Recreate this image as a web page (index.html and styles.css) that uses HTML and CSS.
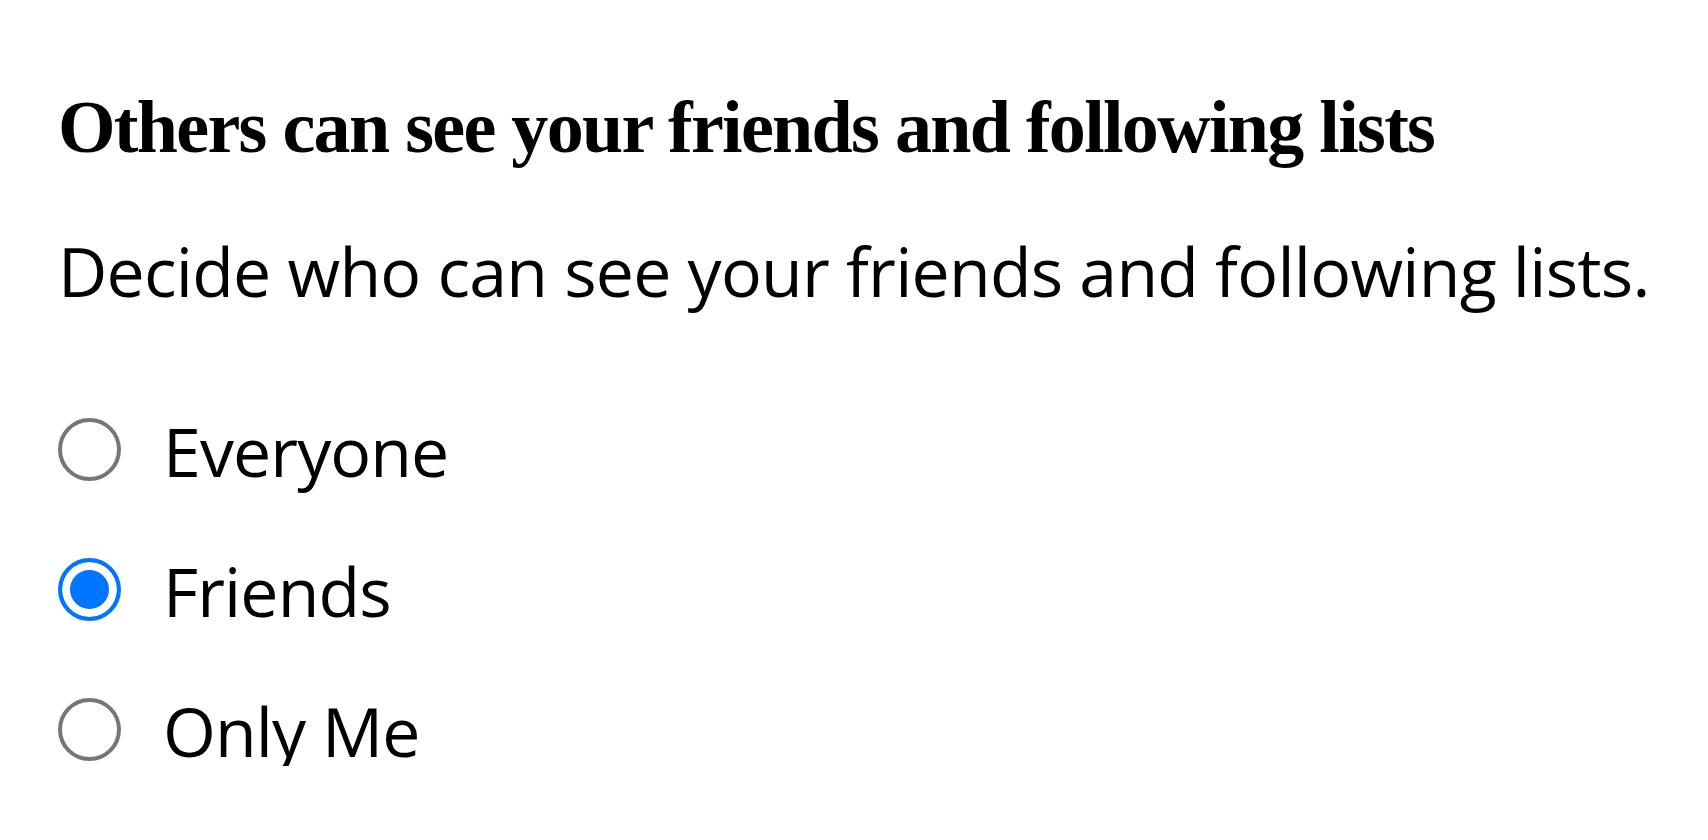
FILE: index.html
```html
<!DOCTYPE html>
<html lang="en">
<head>
  <meta charset="UTF-8" />
  <meta name="viewport" content="width=device-width, initial-scale=1.0" />
  <title>Friends list privacy</title>
  <link rel="stylesheet" href="styles.css">
</head>
<body>
  <div class="privacy-box">
    <h2 class="title">Others can see your friends and following lists</h2>
    <p class="desc">Decide who can see your friends and following lists.</p>
    <form class="audience">
      <label class="option">
        <input type="radio" name="audience" value="everyone">
        <span>Everyone</span>
      </label>
      <label class="option">
        <input type="radio" name="audience" value="friends" checked>
        <span>Friends</span>
      </label>
      <label class="option">
        <input type="radio" name="audience" value="only_me">
        <span>Only Me</span>
      </label>
    </form>
  </div>
</body>
</html>
```

FILE: styles.css
```css
* {
  margin: 0;
  padding: 0;
  box-sizing: border-box;
}
body {
  background: #fff;
  color: #000;
}
.privacy-box {
  padding: 90px 0 0 58px;
}
.title {
  font-family: 'Liberation Serif', 'Times New Roman', serif;
  font-weight: 700;
  font-size: 74px;
  line-height: 74px;
  letter-spacing: -1.7px;
  white-space: nowrap;
}
.desc {
  font-family: 'Open Sans', 'Noto Sans', sans-serif;
  font-size: 68px;
  line-height: 68px;
  letter-spacing: -0.75px;
  white-space: nowrap;
  margin-top: 73px;
}
.audience {
  display: flex;
  flex-direction: column;
  gap: 70px;
  margin-top: 111px;
}
.option {
  display: flex;
  align-items: center;
  gap: 42px;
  height: 70px;
  font-family: 'Open Sans', 'Noto Sans', sans-serif;
  font-size: 68px;
  line-height: 70px;
  letter-spacing: -0.9px;
  cursor: pointer;
}
.option input {
  appearance: none;
  -webkit-appearance: none;
  width: 63px;
  height: 63px;
  margin-bottom: 4px;
  border: 4px solid #767676;
  border-radius: 50%;
  background: #fff;
  flex-shrink: 0;
}
.option input:checked {
  border-color: #0075ff;
  background: #0075ff;
  box-shadow: inset 0 0 0 8px #fff;
}
```
